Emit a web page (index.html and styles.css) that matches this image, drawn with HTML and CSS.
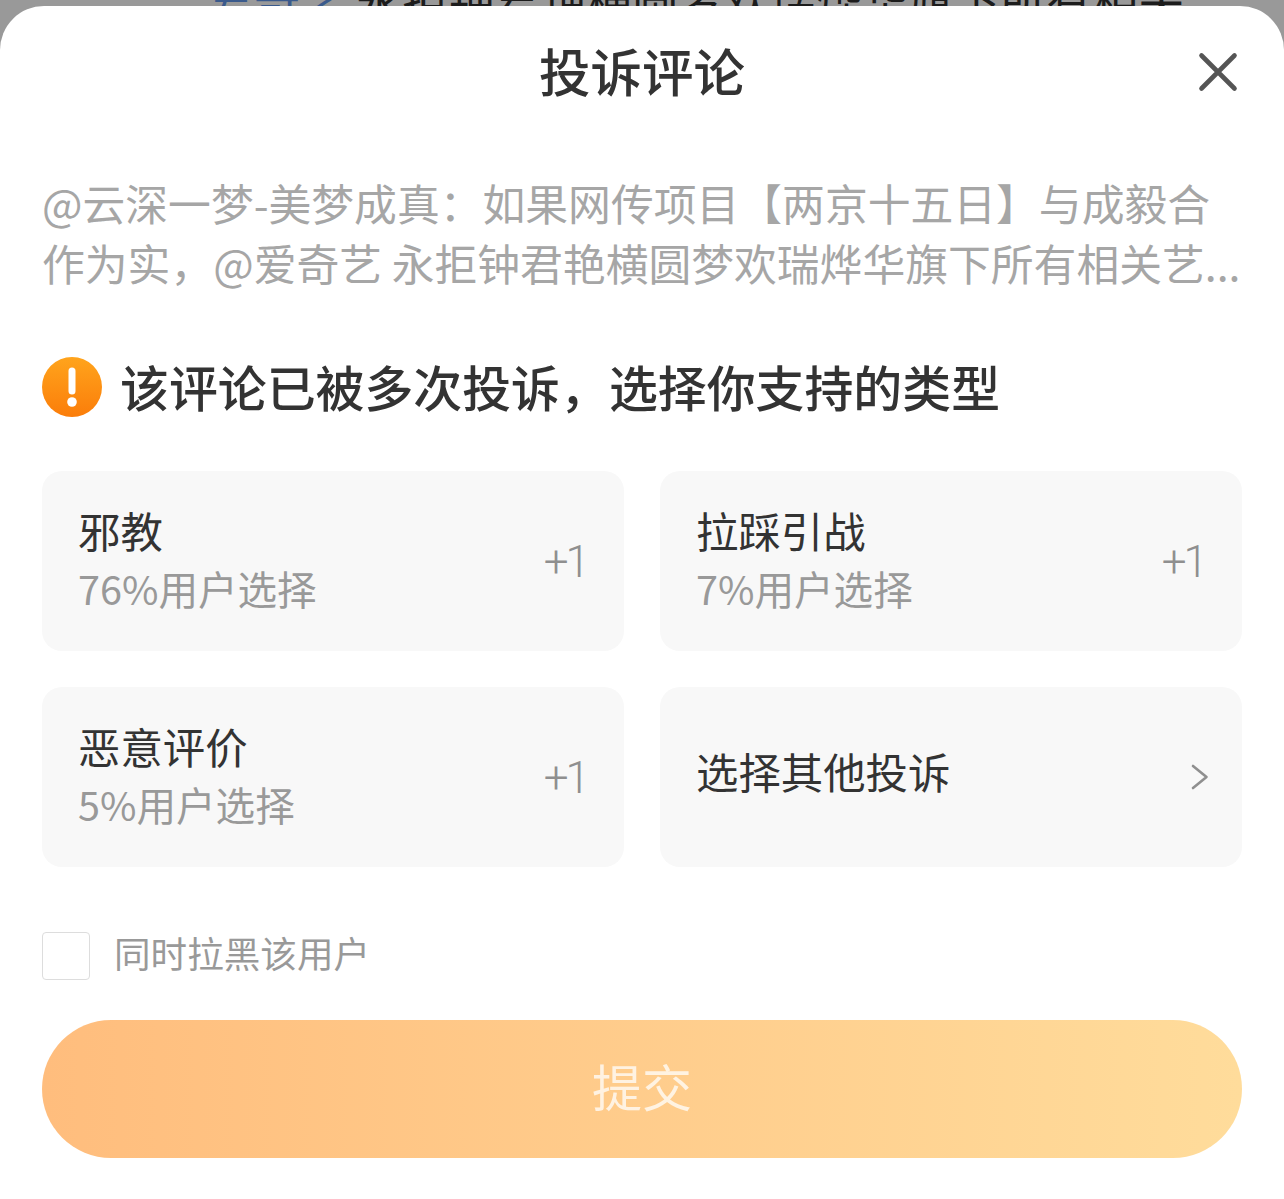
FILE: index.html
```html
<!DOCTYPE html>
<html lang="zh-CN">
<head>
  <meta charset="UTF-8">
  <meta name="viewport" content="width=device-width, initial-scale=1.0">
  <title>投诉评论</title>
  <link rel="stylesheet" href="styles.css">
</head>
<body>
  <div class="backdrop">
    <p class="backdrop-text"><span class="backdrop-name">爱奇艺</span> 永拒钟君艳横圆梦欢瑞烨华旗下所有相关</p>
  </div>
  <div class="sheet">
    <div class="sheet-header">
      <h1 class="sheet-title">投诉评论</h1>
      <svg class="close-icon" width="40" height="40" viewBox="0 0 40 40">
        <path d="M3.5 3.5 L36.5 36.5 M36.5 3.5 L3.5 36.5" stroke="#555" stroke-width="4.6" stroke-linecap="round" fill="none"/>
      </svg>
    </div>
    <p class="quote">@云深一梦-美梦成真：如果网传项目【两京十五日】与成毅合作为实，@爱奇艺 永拒钟君艳横圆梦欢瑞烨华旗下所有相关艺...</p>
    <div class="notice">
      <svg class="notice-icon" width="60" height="60" viewBox="0 0 60 60">
        <defs>
          <linearGradient id="noticeFill" x1="0" y1="0" x2="0" y2="1">
            <stop offset="0" stop-color="#ffa41c"/>
            <stop offset="1" stop-color="#fb7d0a"/>
          </linearGradient>
        </defs>
        <circle cx="30" cy="30" r="30" fill="url(#noticeFill)"/>
        <path d="M30 14 L30 34" stroke="#fff" stroke-width="7" stroke-linecap="round"/>
        <circle cx="30" cy="45" r="4.8" fill="#fff"/>
      </svg>
      <h2 class="notice-text">该评论已被多次投诉，选择你支持的类型</h2>
    </div>
    <div class="options">
      <div class="option">
        <div class="option-body">
          <div class="option-name">邪教</div>
          <div class="option-stat">76%用户选择</div>
        </div>
        <span class="option-plus">+1</span>
      </div>
      <div class="option">
        <div class="option-body">
          <div class="option-name">拉踩引战</div>
          <div class="option-stat">7%用户选择</div>
        </div>
        <span class="option-plus">+1</span>
      </div>
      <div class="option">
        <div class="option-body">
          <div class="option-name">恶意评价</div>
          <div class="option-stat">5%用户选择</div>
        </div>
        <span class="option-plus">+1</span>
      </div>
      <div class="option">
        <div class="option-body option-body-single">
          <div class="option-name">选择其他投诉</div>
        </div>
        <svg class="option-arrow" width="18" height="26" viewBox="0 0 18 26">
          <path d="M2 2 L15.5 13 L2 24" stroke="#8f8f8f" stroke-width="2.6" stroke-linecap="round" stroke-linejoin="round" fill="none"/>
        </svg>
      </div>
    </div>
    <div class="block-row">
      <span class="block-box"></span>
      <span class="block-label">同时拉黑该用户</span>
    </div>
    <div class="submit">提交</div>
  </div>
</body>
</html>
```

FILE: styles.css
```css
* {
  box-sizing: border-box;
}

html, body {
  height: 100%;
}

body {
  margin: 0;
  background-color: #fff;
  color: #333;
  font-family: "Noto Sans CJK SC", "Liberation Sans", sans-serif;
  overflow: hidden;
}

.backdrop {
  height: 50px;
  margin-bottom: -44px;
  background-color: #999;
  overflow: hidden;
}

.backdrop-text {
  margin: -27px 0 0 208px;
  font-size: 46px;
  line-height: 50px;
  color: #1c1c1c;
  white-space: nowrap;
}

.backdrop-name {
  color: #3a5a8c;
}

.sheet {
  position: relative;
  height: 1193px;
  padding: 0 42px;
  background-color: #fff;
  border-radius: 44px 44px 0 0;
}

.sheet-header {
  position: relative;
  height: 132px;
  padding-bottom: 4px;
  display: flex;
  justify-content: center;
  align-items: center;
}

.sheet-title {
  margin: 0;
  font-size: 51.5px;
  font-weight: 500;
  line-height: 64px;
  color: #333;
}

.close-icon {
  position: absolute;
  top: 46px;
  right: 4px;
}

.quote {
  margin: 34px 0 0;
  font-size: 42.8px;
  line-height: 60px;
  height: 120px;
  color: #a6a6a6;
  overflow: hidden;
}

.notice {
  display: flex;
  align-items: center;
  gap: 18px;
  margin-top: 65px;
  height: 60px;
}

.notice-text {
  margin: 0;
  padding-bottom: 2px;
  font-size: 48.9px;
  font-weight: 500;
  line-height: 60px;
  color: #333;
  white-space: nowrap;
}

.options {
  display: grid;
  grid-template-columns: 582px 582px;
  grid-auto-rows: 180px;
  gap: 36px;
  margin-top: 54px;
}

.option {
  display: flex;
  align-items: center;
  justify-content: space-between;
  padding: 0 34px 0 36px;
  background-color: #f8f8f8;
  border-radius: 20px;
}

.option-body {
  padding-bottom: 2px;
}

.option-body-single {
  padding-bottom: 12px;
}

.option-name {
  font-size: 42.4px;
  line-height: 56px;
  color: #333;
}

.option-stat {
  font-size: 39.6px;
  line-height: 60px;
  color: #999;
}

.option-plus {
  padding-top: 2px;
  font-family: "Roboto", sans-serif;
  font-size: 44px;
  font-weight: 300;
  letter-spacing: -3px;
  margin-right: 3px;
  color: #8f8f8f;
}

.option-arrow {
  margin-right: -1px;
}

.block-row {
  display: flex;
  align-items: center;
  gap: 24px;
  margin-top: 65px;
  height: 48px;
}

.block-box {
  width: 48px;
  height: 48px;
  background-color: #fff;
  border: 1px solid #ddd;
  border-radius: 4px;
}

.block-label {
  padding-bottom: 6px;
  font-size: 36.6px;
  line-height: 48px;
  color: #999;
}

.submit {
  margin-top: 40px;
  height: 138px;
  padding-bottom: 8px;
  display: flex;
  align-items: center;
  justify-content: center;
  font-size: 50px;
  color: rgba(255, 255, 255, 0.75);
  background: linear-gradient(90deg, #ffbd7d, #ffdc9b);
  border-radius: 69px;
}
```
